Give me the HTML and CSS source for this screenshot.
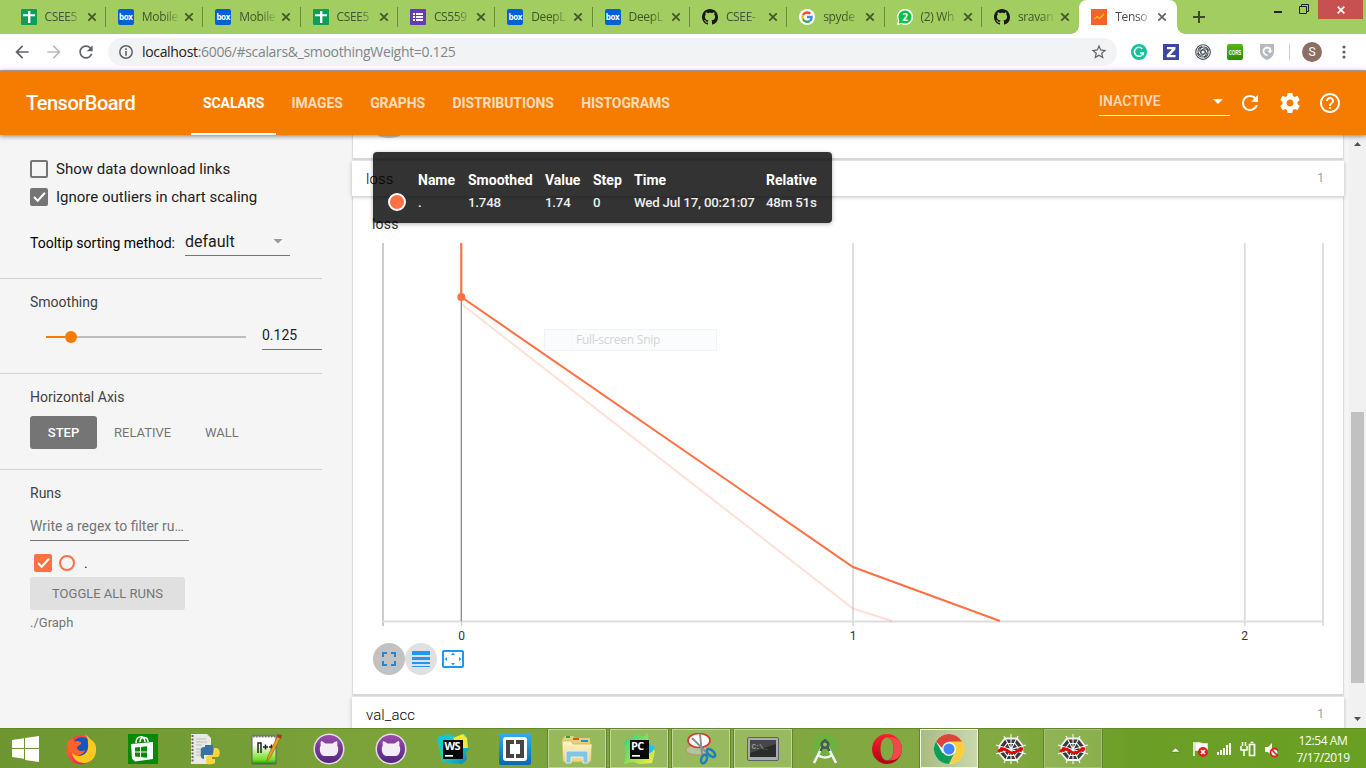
FILE: index.html
```html
<!DOCTYPE html>
<html lang="en">
<head>
<meta charset="utf-8">
<title>TensorBoard</title>
<link rel="stylesheet" href="styles.css">
</head>
<body>
<svg class="defs" width="0" height="0">
  <defs>
    <symbol id="sheet" viewBox="0 0 16 16"><rect width="16" height="16" rx="1" fill="#0f9d58"/><path d="M7 2h2.400v3.300H14v2H9.400V14H7V7.300H2v-2h5z" fill="#fff"/></symbol>
    <symbol id="close" viewBox="0 0 10 10"><path d="M1.300 1.300l7.400 7.400M8.700 1.300L1.300 8.700" stroke="currentColor" stroke-width="1.700"/></symbol>
    <symbol id="github" viewBox="0 0 16 16"><path fill="#191717" d="M8 0C3.580 0 0 3.580 0 8c0 3.540 2.290 6.530 5.470 7.590.4.070.55-.17.55-.38 0-.19-.01-.82-.01-1.490-2.010.37-2.530-.49-2.690-.94-.09-.23-.48-.94-.82-1.130-.28-.15-.68-.52-.01-.53.63-.01 1.080.58 1.230.82.72 1.210 1.870.87 2.330.66.07-.52.28-.87.51-1.070-1.780-.2-3.640-.89-3.640-3.950 0-.87.31-1.590.82-2.150-.08-.2-.36-1.020.08-2.120 0 0 .67-.21 2.200.82.64-.18 1.320-.27 2-.27s1.360.09 2 .27c1.530-1.040 2.200-.82 2.200-.82.44 1.100.16 1.920.08 2.120.51.56.82 1.270.82 2.150 0 3.070-1.870 3.750-3.650 3.950.29.25.54.73.54 1.480 0 1.070-.01 1.930-.01 2.200 0 .21.15.46.55.38A8.010 8.010 0 0016 8c0-4.420-3.580-8-8-8z"/></symbol>
    <symbol id="refresh" viewBox="0 0 24 24"><path fill="currentColor" d="M17.650 6.350C16.200 4.900 14.210 4 12 4c-4.420 0-7.990 3.580-7.990 8s3.570 8 7.990 8c3.730 0 6.840-2.550 7.730-6h-2.080c-.82 2.330-3.040 4-5.650 4-3.310 0-6-2.690-6-6s2.690-6 6-6c1.660 0 3.140.69 4.220 1.780L13 11h7V4l-2.350 2.350z"/></symbol>
    <symbol id="arrow" viewBox="0 0 24 24"><path fill="currentColor" d="M20 11H7.830l5.590-5.590L12 4l-8 8 8 8 1.410-1.410L7.830 13H20v-2z"/></symbol>
    <symbol id="cat" viewBox="0 0 32 32"><circle cx="16" cy="16" r="15.500" fill="#e6deea"/><circle cx="16" cy="16" r="14" fill="url(#purple)"/><path d="M8 8q2.500.5 4.500 2.500h7Q21.500 8.500 24 8q.8 2 .3 4.500 1.200 1.500.9 4.500-.4 5.500-4.700 6H11.500q-4.300-.5-4.700-6-.3-3 .9-4.500Q7.200 10 8 8z" fill="#f3eef5"/></symbol>
    <symbol id="web" viewBox="0 0 32 32"><path d="M10 5.500h12l5.500 7v8L22 27H10l-5.500-6.500v-8z" fill="#3a3a3a" stroke="#f4f4f4" stroke-width="1.800"/><g fill="none" stroke="#f4f4f4" stroke-width="1.100"><path d="M16 1v30M1 12l30 9M1 21l30-9M9 3l14 27M23 3L9 30"/><path d="M12 10.500h8l3 4v4l-3 4h-8l-3-4v-4z"/></g><path d="M3.500 19c4-6.500 8-1 12 .5 6 2.500 6-4 12.500-3.500" fill="none" stroke="#f00000" stroke-width="2.800"/></symbol>
    <linearGradient id="purple" x2="0" y2="1"><stop stop-color="#9b4bab"/><stop offset="1" stop-color="#51277f"/></linearGradient>
    <linearGradient id="fox" x2=".6" y2="1"><stop stop-color="#ff2858"/><stop offset=".45" stop-color="#ff5a2a"/><stop offset="1" stop-color="#f01c60"/></linearGradient>
    <linearGradient id="folder" x2="0" y2="1"><stop stop-color="#fff5c8"/><stop offset="1" stop-color="#ecd27b"/></linearGradient>
    <linearGradient id="jetA" x2="1" y2="1"><stop stop-color="#08c5ec"/><stop offset=".5" stop-color="#25cda8"/><stop offset="1" stop-color="#087cdf"/></linearGradient>
    <linearGradient id="jetB" x2="1" y2="1"><stop stop-color="#20d58c"/><stop offset=".6" stop-color="#a6df50"/><stop offset="1" stop-color="#fcf43f"/></linearGradient>
    <linearGradient id="operaRed" x2="0" y2="1"><stop stop-color="#fb2030"/><stop offset="1" stop-color="#a90314"/></linearGradient>
    <linearGradient id="brack" x2="0" y2="1"><stop stop-color="#30b0ec"/><stop offset="1" stop-color="#0868b4"/></linearGradient>
    <linearGradient id="note" x2="0" y2="1"><stop offset=".3" stop-color="#fff"/><stop offset=".85" stop-color="#72df23"/><stop offset="1" stop-color="#168a20"/></linearGradient>
  </defs>
</svg>

<header class="tabs">
  <div class="tab"><svg class="fav"><use href="#sheet"/></svg><span>CSEE5</span><svg class="x"><use href="#close"/></svg></div>
  <div class="tab"><i class="fav box">box</i><span>Mobile</span><svg class="x"><use href="#close"/></svg></div>
  <div class="tab"><i class="fav box">box</i><span>Mobile</span><svg class="x"><use href="#close"/></svg></div>
  <div class="tab"><svg class="fav"><use href="#sheet"/></svg><span>CSEE5</span><svg class="x"><use href="#close"/></svg></div>
  <div class="tab"><svg class="fav" viewBox="0 0 16 16"><rect width="16" height="16" rx="1" fill="#673ab7"/><path d="M3 4h2v2H3zM6 4h7v2H6zM3 7h2v2H3zM6 7h7v2H6zM3 10h2v2H3zM6 10h7v2H6z" fill="#fff"/></svg><span>CS559</span><svg class="x"><use href="#close"/></svg></div>
  <div class="tab"><i class="fav box">box</i><span>DeepL</span><svg class="x"><use href="#close"/></svg></div>
  <div class="tab"><i class="fav box">box</i><span>DeepL</span><svg class="x"><use href="#close"/></svg></div>
  <div class="tab"><svg class="fav"><use href="#github"/></svg><span>CSEE-</span><svg class="x"><use href="#close"/></svg></div>
  <div class="tab"><svg class="fav" viewBox="0 0 16 16"><circle cx="8" cy="8" r="8" fill="#fff"/><g fill="none" stroke-width="2.300"><path d="M4 6a4.700 4.700 0 017.300-1.300" stroke="#ea4335"/><path d="M4 6a4.700 4.700 0 000 4.200" stroke="#fbbc05"/><path d="M4 10.200a4.700 4.700 0 007 1.600" stroke="#34a853"/><path d="M11 11.800A4.700 4.700 0 0012.600 8H8" stroke="#4285f4"/></g></svg><span>spyde</span><svg class="x"><use href="#close"/></svg></div>
  <div class="tab"><svg class="fav" viewBox="0 0 16 16"><path d="M0 16l1-4.500A8 8 0 114.500 15z" fill="#fff"/><path d="M1.700 14.400l.7-3A6.500 6.500 0 115 13.800z" fill="#08c143"/><text x="8" y="12" text-anchor="middle" class="fav-num">2</text></svg><span>(2) Wh</span><svg class="x"><use href="#close"/></svg></div>
  <div class="tab"><svg class="fav"><use href="#github"/></svg><span>sravan</span><svg class="x"><use href="#close"/></svg></div>
  <div class="tab active"><svg class="fav" viewBox="0 0 16 16"><rect width="16" height="16" fill="#f4632a"/><path d="M3 10l3.500-2.500 2 2L13 5" fill="none" stroke="#ffb62c" stroke-width="1.300"/></svg><span>Tenso</span><svg class="x"><use href="#close"/></svg></div>
  <svg class="plus" viewBox="0 0 12 12"><path d="M6 0v12M0 6h12" stroke="#3b4a28" stroke-width="2"/></svg>
  <div class="window">
    <svg width="50" height="19" viewBox="0 0 50 19"><path d="M6 11h8v2H6z" fill="#222"/><path d="M31.500 6.500h7v7h-7zM33.500 6V4.500h7v7H39" fill="none" stroke="#222"/></svg>
    <b><svg width="8" height="8" viewBox="0 0 8 8"><path d="M.7.7l6.600 6.600M7.300.7L.7 7.300" stroke="#fff" stroke-width="1.700"/></svg></b>
  </div>
</header>

<div class="toolbar">
  <svg class="nav"><use href="#arrow"/></svg>
  <svg class="nav fwd"><use href="#arrow"/></svg>
  <svg class="nav"><use href="#refresh"/></svg>
  <div class="omni">
    <svg width="14" height="14" viewBox="0 0 14 14"><circle cx="7" cy="7" r="6.200" fill="none" stroke="#5f6368" stroke-width="1.500"/><path d="M6.200 3.300h1.600v1.600H6.200zM6.200 6h1.600v4.700H6.200z" fill="#5f6368"/></svg>
    <span class="url"><b>localhost</b>:6006/#scalars&amp;_smoothingWeight=0.125</span>
    <svg width="18" height="18" viewBox="0 0 24 24"><path fill="#5f6368" d="M22 9.240l-7.190-.62L12 2 9.190 8.630 2 9.240l5.460 4.730L5.820 21 12 17.270 18.180 21l-1.630-7.030L22 9.240zM12 15.400l-3.760 2.270 1-4.280-3.320-2.880 4.380-.38L12 6.100l1.710 4.040 4.380.38-3.320 2.880 1 4.280L12 15.400z"/></svg>
  </div>
  <div class="ext">
    <svg viewBox="0 0 16 16"><circle cx="8" cy="8" r="8" fill="#15c39a"/><path d="M11.200 4.700A4.500 4.500 0 1012.300 9H9M12.300 8.300v3" fill="none" stroke="#fff" stroke-width="1.500"/></svg>
    <svg viewBox="0 0 16 16"><rect width="16" height="16" fill="#3b47a0"/><path d="M4 3h8.500v2.200L7.300 11h5.200v2.200H3.700V11L9 5.200H4z" fill="#fff"/></svg>
    <svg viewBox="0 0 16 16"><g fill="none" stroke="#4b545c" stroke-width="1.150"><circle cx="8" cy="8" r="7.300"/><circle cx="8" cy="8" r="2.200"/><path d="M6 9C3.500 6.500 5 3 8.500 3c2.500 0 4.500 1.500 5 4M7 6c2.500-2.500 6-1 6 2.500 0 2.500-1.500 4.500-4 5M10 7c2.500 2.500 1 6-2.500 6-2.500 0-4.500-1.500-5-4M9 10c-2.500 2.500-6 1-6-2.500C3 5 4.500 3 7 2.500"/></g></svg>
    <i class="cors"><svg viewBox="0 0 16 16"><text x="8" y="11" text-anchor="middle" textLength="12.500" lengthAdjust="spacingAndGlyphs">CORS</text></svg></i>
    <svg viewBox="0 0 16 16"><path d="M1 0h14v8c0 4-4 7-7 8-3-1-7-4-7-8z" fill="#b5bac2"/><path d="M8.500 11A3.700 3.700 0 118 3.500c2 0 3.400 1 3.400 3.200" fill="none" stroke="#fff" stroke-width="1.800"/><path d="M8.500 6.500h5l-2.500 3z" fill="#fff"/></svg>
    <i class="rule"></i>
    <i class="avatar">S</i>
    <svg class="dots" viewBox="0 0 4 16"><g fill="#5f6368"><circle cx="2" cy="3" r="1.600"/><circle cx="2" cy="8" r="1.600"/><circle cx="2" cy="13" r="1.600"/></g></svg>
  </div>
</div>

<div class="board-bar">
  <h1>TensorBoard</h1>
  <nav><a class="on">SCALARS</a><a>IMAGES</a><a>GRAPHS</a><a>DISTRIBUTIONS</a><a>HISTOGRAMS</a></nav>
  <div class="status"><span>INACTIVE</span><i class="tri"></i></div>
  <div class="actions">
    <svg><use href="#refresh"/></svg>
    <svg viewBox="0 0 24 24"><path fill="#fff" d="M19.430 12.980c.04-.32.070-.64.070-.98s-.03-.66-.07-.98l2.110-1.650c.19-.15.24-.42.12-.64l-2-3.460c-.12-.22-.39-.3-.61-.22l-2.490 1c-.52-.4-1.080-.73-1.690-.98l-.38-2.650C14.460 2.180 14.250 2 14 2h-4c-.25 0-.46.18-.49.42l-.38 2.650c-.61.25-1.170.59-1.690.98l-2.490-1c-.23-.09-.49 0-.61.22l-2 3.460c-.13.22-.07.49.12.64l2.110 1.650c-.04.32-.07.65-.07.98s.03.66.070.98l-2.110 1.650c-.19.15-.24.42-.12.64l2 3.460c.12.22.39.3.61.22l2.490-1c.52.4 1.080.73 1.690.98l.38 2.650c.03.24.24.42.49.42h4c.25 0 .46-.18.49-.42l.38-2.650c.61-.25 1.170-.59 1.690-.98l2.490 1c.23.09.49 0 .61-.22l2-3.460c.12-.22.070-.49-.12-.64l-2.110-1.650zM12 15.500c-1.930 0-3.500-1.570-3.500-3.500s1.570-3.500 3.500-3.500 3.500 1.570 3.500 3.500-1.570 3.500-3.500 3.500z"/></svg>
    <svg viewBox="0 0 24 24"><path fill="#fff" d="M11 18h2v-2h-2v2zm1-16C6.480 2 2 6.480 2 12s4.480 10 10 10 10-4.480 10-10S17.520 2 12 2zm0 18c-4.410 0-8-3.590-8-8s3.590-8 8-8 8 3.590 8 8-3.590 8-8 8zm0-14c-2.210 0-4 1.790-4 4h2c0-1.100.9-2 2-2s2 .9 2 2c0 2-3 1.750-3 5h2c0-2.250 3-2.500 3-5 0-2.210-1.790-4-4-4z"/></svg>
  </div>
</div>

<main>
  <aside>
    <section class="options">
      <label><i class="check"></i>Show data download links</label>
      <label><i class="check full"><svg viewBox="0 0 18 18"><path d="M4 9l3.700 3.700L15 4.800" fill="none" stroke="#fff" stroke-width="2"/></svg></i>Ignore outliers in chart scaling</label>
      <div class="sort"><span>Tooltip sorting method:</span><div class="select">default<i class="tri"></i></div></div>
    </section>
    <section class="smooth">
      <h3>Smoothing</h3>
      <div class="slider-row"><div class="slider"><i class="filled"></i><i class="knob"></i><i class="rest"></i></div><div class="num">0.125</div></div>
    </section>
    <section class="axis">
      <h3>Horizontal Axis</h3>
      <div class="buttons"><b>STEP</b><span class="rel">RELATIVE</span><span>WALL</span></div>
    </section>
    <section class="runs">
      <h3>Runs</h3>
      <div class="regex">Write a regex to filter ru…</div>
      <div class="run"><i class="check orange"><svg viewBox="0 0 18 18"><path d="M4 9l3.700 3.700L15 4.800" fill="none" stroke="#fff" stroke-width="2"/></svg></i><i class="ring"></i><span>.</span></div>
      <div class="toggle">TOGGLE ALL RUNS</div>
      <div class="path">./Graph</div>
    </section>
  </aside>

  <div class="content">
    <div class="card prev"><i></i></div>
    <div class="pane-head"><span>loss</span><small>1</small></div>
    <div class="card chart">
      <h4>loss</h4>
      <svg class="plot" width="990" height="405" viewBox="353 240 990 405">
        <path d="M383 243v383" stroke="#ccc" stroke-width="2"/>
        <path d="M853 243v383M1244.800 243v383M1323 243v383" stroke="#dcdcdc" stroke-width="1.800"/>
        <path d="M382 621.500h942" stroke="#ddd" stroke-width="2"/>
        <path d="M461.300 243v378" stroke="#888" stroke-width="1.300"/><path d="M461.500 621v5" stroke="#ccc"/>
        <path d="M461.500 243v61L853 608.500l39 12.500" fill="none" stroke="#ff7043" stroke-opacity=".22" stroke-width="2"/>
        <path d="M461.300 243v54L853 567l147 54" fill="none" stroke="#ff7043" stroke-width="2"/>
        <circle cx="461.300" cy="297" r="4" fill="#ff7043"/>
        <g class="ticks"><text x="461.500" y="640">0</text><text x="853" y="640">1</text><text x="1244.500" y="640">2</text></g>
      </svg>
      <div class="chart-tools">
        <i class="round dark"><svg viewBox="0 0 24 24"><path fill="#1f86d8" d="M7 14H5v5h5v-2H7v-3zm-2-4h2V7h3V5H5v5zm12 7h-3v2h5v-5h-2v3zM14 5v2h3v3h2V5h-5z"/></svg></i>
        <i class="round"><svg viewBox="0 0 24 24"><path fill="#2196f3" d="M3 17h18v-2H3v2zm0 3h18v-1H3v1zm0-7h18v-3H3v3zm0-9v4h18V4H3z"/></svg></i>
        <i class="round none"><svg viewBox="0 0 24 24"><path fill="#2196f3" d="M12 5.500L10 8h4l-2-2.500zM18 10v4l2.500-2L18 10zM6 10l-2.500 2L6 14v-4zm8 6h-4l2 2.500 2-2.500zm7-13H3c-1.100 0-2 .9-2 2v14c0 1.100.9 2 2 2h18c1.100 0 2-.9 2-2V5c0-1.100-.9-2-2-2zm0 16.010H3V4.990h18v14.020z"/></svg></i>
      </div>
      <div class="ghost">Full-screen Snip</div>
    </div>
    <div class="pane-head last"><span>val_acc</span><small>1</small></div>
    <div class="tip">
      <table>
        <tr><th></th><th>Name</th><th>Smoothed</th><th>Value</th><th>Step</th><th>Time</th><th>Relative</th></tr>
        <tr><td><i></i></td><td>.</td><td>1.748</td><td>1.74</td><td>0</td><td>Wed Jul 17, 00:21:07</td><td>48m 51s</td></tr>
      </table>
    </div>
  </div>
  <div class="scroll"><i class="up"></i><i class="thumb"></i><i class="down"></i></div>
</main>

<footer>
  <div class="start"><svg width="28" height="26" viewBox="0 0 28 26"><path d="M0 4l12-1.800V12H0zM13 2l14-2v12H13zM0 13h12v9.800L0 21zM13 13h14v13l-14-2z" fill="#fff"/></svg></div>
  <div class="app"><svg viewBox="0 0 32 32"><circle cx="16" cy="17" r="14.500" fill="url(#fox)"/><circle cx="17" cy="13.500" r="9.500" fill="#1656bd"/><path d="M20 1c3 4 3 6 3 9 1 8-3 13-9 13-3 0-5-2-7-3 1 6 6 10 12 10 8 0 13-7 12-15 0-5-3-7-6-9-1-2-3-3-5-5z" fill="#ffc820"/><path d="M3 8l5-3c0 3 1 4 4 3 2 0 5 1 4 3l-4 3c0 4 4 5 8 3-1 5-8 7-13 3C2 17 1 12 3 8z" fill="#ff622a"/></svg></div>
  <div class="app"><svg viewBox="0 0 32 32"><rect x="1" y="1" width="30" height="30" fill="#078a07"/><path d="M4 11l22-2v17l-18 2.500-3-3z" fill="#fff"/><path d="M9 10c0-8 9-8 9-1M13 9c0-6 8-6 8 0" fill="none" stroke="#fff" stroke-width="1.500"/><path d="M8 14.500l5-.5v4.500H8zM14 13.900l6-.7v5.300h-6zM8 19.500h5V24l-5-.5zM14 19.500h6v5.300l-6-.8z" fill="#078a07"/></svg></div>
  <div class="app"><svg viewBox="0 0 32 32"><path d="M2 1h16l4 4v26H2z" fill="#e8e8e4"/><path d="M3.500 2v28" stroke="#666" stroke-width="2" stroke-dasharray="2 1.500"/><path d="M7 6h10M7 9h11M7 12h6M7 16h5M7 19h5M7 22h5" stroke="#bbb"/><path d="M12 19c-1-4 1-5 4-5v-2h8v7c0 2-1 3-3 3h-6v4c-3 0-4-3-3-7z" fill="#3872a3"/><path d="M25 15h3c4 2 3 8 1 9h-6v2h3v4c-3 2-9 2-9-1v-4c0-2 2-3 4-3h3z" fill="#ffd43b"/></svg></div>
  <div class="app"><svg viewBox="0 0 32 32"><path d="M1 3h24v28H1z" fill="url(#note)" stroke="#606060"/><path d="M2 3h22" stroke="#777" stroke-width="3" stroke-dasharray="1.500 1.500"/><path d="M7 20V10h3v10M12 14h5m-2.500-2.500v5M18 14h5m-2.500-2.500v5" fill="none" stroke="#222" stroke-width="1.500"/><path d="M27 2l3 2-11 21-3 3 1-5z" fill="#e9a11e" stroke="#9b6412" stroke-width=".7"/><path d="M26 1l5 1-1 4-4-2z" fill="#a23b37"/></svg></div>
  <div class="app"><svg><use href="#cat"/></svg></div>
  <div class="app"><svg><use href="#cat"/></svg></div>
  <div class="app"><svg viewBox="0 0 32 32"><path d="M0 4l12-3 5 3L29 1l1 10 2 5-3 4 1 6-5 5-20-2z" fill="url(#jetA)"/><path d="M16 5l10-4 4 4 1 10h-9z" fill="#f5e83c"/><path d="M6 7h20v19H6z" fill="#080808"/><text x="7.500" y="17" class="jet">WS</text><path d="M8 22h8v1.700H8z" fill="#fff"/></svg></div>
  <div class="app"><svg viewBox="0 0 32 32"><rect width="32" height="32" rx="2" fill="url(#brack)"/><rect x="4" y="4" width="24" height="24" rx="3" fill="#fff"/><path d="M7 7h8v4h-4v10h4v4H7zM17 7h8v18h-8v-4h4V11h-4z" fill="#454545"/></svg></div>
  <div class="app open"><svg viewBox="0 0 32 32"><path d="M1 7l3-4h8l2 2h15l1 23H2z" fill="#e7cf7b"/><path d="M5 3h4v2H5z" fill="#17af34"/><path d="M12 5h6v2h-6z" fill="#d55727"/><path d="M20 7h7v2h-7z" fill="#258dd0"/><path d="M1 8h9l2 3h19l-1 18H2z" fill="url(#folder)" stroke="#c9ad52" stroke-width=".7"/><path d="M5 30V20q0-2 2-2h18q2 0 2 2v10h-5v-6H10v6z" fill="#83c4e5" stroke="#d8f1fb"/></svg></div>
  <div class="app open"><svg viewBox="0 0 32 32"><path d="M1 9L14 1l6 3 5-4 1 12 6 6-3 12-12 1-7-2-9 2 2-10z" fill="url(#jetB)"/><path d="M26 11l6 3-3 5-4 2z" fill="#12c8f5"/><path d="M7 7h19v19H7z" fill="#080808"/><text x="8" y="17" class="jet">PC</text><path d="M9 22h8v1.700H9z" fill="#fff"/></svg></div>
  <div class="app open"><svg viewBox="0 0 32 32"><ellipse cx="12" cy="17" rx="11" ry="5" fill="#b9c39b" stroke="#c7766c" stroke-width=".7"/><ellipse cx="14" cy="7.500" rx="11" ry="7" fill="#fff" stroke="#d73a31" stroke-width="1.700"/><path d="M7 5l14 14M15 1l2 20" stroke="#879198" stroke-width="2"/><g fill="none" stroke="#187fc1" stroke-width="2.500"><ellipse cx="19" cy="26" rx="2.700" ry="4.500" transform="rotate(20 19 26)"/><ellipse cx="26" cy="20" rx="2.700" ry="5" transform="rotate(-48 26 20)"/></g></svg></div>
  <div class="app open"><svg viewBox="0 0 32 32"><rect x=".5" y="4.500" width="31" height="23" rx="1.500" fill="#a9acad" stroke="#5d6263"/><rect x="3" y="7" width="26" height="17" fill="#292b2c"/><text x="4.500" y="15.500" class="cmd">C:\_</text><path d="M3 7h26v4L3 20z" fill="#fff" opacity=".13"/></svg></div>
  <div class="app"><svg viewBox="0 0 32 32"><circle cx="16" cy="14" r="13" fill="#6fb13f"/><path d="M11 18L5 30M21 18l6 12M8 21.500q8 6 16 0M13 14l-3 6M19 14l3 6" fill="none" stroke="#f2f2f2" stroke-width="2.600"/><circle cx="16" cy="11.500" r="3.300" fill="#8fc45d" stroke="#455a54" stroke-width="2.600"/><path d="M16 6v3M13.500 14l-2 4M18.500 14l2 4" stroke="#455a54" stroke-width="2.600"/></svg></div>
  <div class="app"><svg viewBox="0 0 32 32"><path fill-rule="evenodd" d="M16 1a15 15 0 100 30 15 15 0 000-30zm0 3.500c4 0 6.500 5 6.500 11.500S20 27.500 16 27.500 9.500 22.500 9.500 16 12 4.500 16 4.500z" fill="url(#operaRed)"/><path d="M17 4.500c11-2 14 6 14 11.500 0 7-5 12-14 11.500 4-1 5.500-6 5.500-11.500S21 5.500 17 4.500z" fill="#f0484b"/></svg></div>
  <div class="app open current"><svg viewBox="0 0 32 32"><circle cx="16" cy="16" r="15" fill="#fff"/><path d="M16 8h13a15 15 0 01-13 23l6.500-12z" fill="#ffcd40"/><path d="M3 8.500L9.500 20 22 19l-6 12A15 15 0 013 8.500z" fill="#0f9d58"/><path d="M3 8.500A15 15 0 0129 8.500H16l-6.500 7z" fill="#db4437"/><circle cx="16" cy="16" r="7" fill="#f4f4f4"/><circle cx="16" cy="16" r="5.500" fill="#4285f4"/></svg></div>
  <div class="app"><svg><use href="#web"/></svg></div>
  <div class="app open faint"><svg><use href="#web"/></svg></div>
  <div class="tray">
    <svg width="110" height="24" viewBox="1168 737 110 24"><path d="M1171 752l4.500-4 4.500 4z" fill="#fff" stroke="#46631e" stroke-width=".5"/><path d="M1194 742v14M1196 743h4l2 1h5v7h-6l-1-1h-4z" fill="#fff" stroke="#fff" stroke-width="1.500"/><circle cx="1203" cy="752" r="5" fill="#df2020"/><path d="M1201 750l4 4m0-4l-4 4" stroke="#fff" stroke-width="1.600"/><path d="M1217 752h2v3h-2zM1220 750h2v5h-2zM1223 748h2v7h-2zM1226 745h2v10h-2zM1229 743h2v12h-2z" fill="#fff"/><path d="M1241 746v4h6v-4M1242.500 742v4m3-4v4M1244 750v6" stroke="#fff" stroke-width="1.500" fill="none"/><path d="M1249.500 744.500h5v11h-5zM1250.500 742.500h3" stroke="#fff" stroke-width="1.700" fill="none"/><path d="M1265 747h3l4-4v13l-4-4h-3z" fill="#fff"/><circle cx="1274.500" cy="752.500" r="4" fill="#eee" stroke="#df2020" stroke-width="1.800"/><path d="M1272 750l5 5" stroke="#df2020" stroke-width="1.500"/></svg>
    <div class="clock"><span>12:54 AM</span><span>7/17/2019</span></div>
  </div>
</footer>
</body>
</html>
```
FILE: styles.css
```css
* { box-sizing: border-box; }
body { margin: 0; width: 1366px; height: 768px; overflow: hidden; display: flex; flex-direction: column; font-family: Roboto, sans-serif; background: #f5f5f5; color: #212121; }
i { font-style: normal; display: block; flex: none; }
svg { display: block; flex: none; }
h1, h3, h4 { margin: 0; font-weight: 400; }
.defs { position: absolute; }

.tabs { height: 34px; flex: none; display: flex; background: #a2cd60; padding-left: 8.500px; font: 12px/34px "Open Sans", sans-serif; color: #43542e; }
.tab { width: 97.350px; flex: none; display: flex; align-items: center; padding-left: 12px; position: relative; }
.tab:not(.active)::after { content: ""; position: absolute; right: 0; top: 7px; width: 1px; height: 20px; background: #6c883f; }
.tab:nth-child(11)::after { display: none; }
.tab span { width: 36px; margin-left: 8px; white-space: nowrap; letter-spacing: -.35px; mask-image: linear-gradient(90deg, #000 60%, rgba(0,0,0,.15)); }
.fav { width: 16px; height: 16px; }
.box { background: #0061d5; border-radius: 2px; color: #fff; font: bold 8px/15px "Open Sans", sans-serif; text-align: center; letter-spacing: -.4px; }
.fav-num { font: bold 10px "Open Sans", sans-serif; fill: #fff; }
.x { width: 10px; height: 10px; margin-left: 6px; color: #43542e; }
.active { background: #fff; border-radius: 8px 8px 0 0; color: #45494d; }
.active .x { color: #5f6368; }
.active::before { content: ""; position: absolute; left: -8px; right: -8px; bottom: 0; height: 8px; background: radial-gradient(circle at 0 0, transparent 7.5px, #fff 8px) left / 8px 8px no-repeat, radial-gradient(circle at 8px 0, transparent 7.5px, #fff 8px) right / 8px 8px no-repeat; }
.plus { width: 12px; height: 12px; margin: 11px 0 0 16px; }
.window { margin-left: auto; display: flex; padding-right: 3px; }
.window b { width: 45px; height: 19px; background: #c75050; display: flex; align-items: center; justify-content: center; }

.toolbar { height: 37px; flex: none; display: flex; background: #fff; border-bottom: 1px solid #b4b4b4; padding: 4px 0 5px 12px; }
.nav { width: 20px; height: 20px; margin: 4px 12px 0 0; color: #5f6368; }
.fwd { transform: scaleX(-1); color: #b9bbbd; }
.omni { width: 1009px; height: 28px; border-radius: 14px; background: #f1f3f4; display: flex; align-items: center; padding: 0 9px 0 11px; font: 14px "Open Sans", sans-serif; color: #80868b; }
.url { flex: 1; margin-left: 9px; letter-spacing: -.33px; padding-bottom: 1px; }
.url b { font-weight: 400; color: #202124; }
.ext { display: flex; align-items: center; gap: 16px; margin-left: 14px; }
.ext svg { width: 16px; height: 16px; }
.cors { width: 16px; height: 16px; border-radius: 2px; background: linear-gradient(#5ab514, #2a8c00); }
.cors text { font: bold 8px "Liberation Sans", sans-serif; fill: #fff; }
.rule { width: 1px; height: 16px; background: #ccc; margin-left: -2px; }
.avatar { width: 20px; height: 20px; border-radius: 50%; background: #8d6e63; color: #fff; font: 12px/20px Roboto, sans-serif; text-align: center; margin-left: -4px; }
.ext .dots { width: 4px; margin-left: 4px; }

.board-bar { height: 64px; flex: none; background: #f57c00; color: #fff; display: flex; align-items: center; padding-left: 26px; box-shadow: 0 1px 5px rgba(0,0,0,.5); position: relative; z-index: 3; }
h1 { width: 165px; font-size: 20px; font-weight: 500; letter-spacing: -.5px; }
.board-bar nav { display: flex; height: 64px; gap: 3.400px; font: 700 14px/64px Roboto, sans-serif; letter-spacing: -.1px; }
.board-bar a { padding: 0 12px; color: #fddcbb; }
.board-bar .on { color: #fff; border-bottom: 2px solid #fff; }
.status { width: 131px; height: 29px; margin-left: auto; border-bottom: 1px solid #fff; display: flex; justify-content: space-between; align-items: center; padding-right: 7px; font-size: 14px; font-weight: 500; color: #fddcbb; margin-top: -4px; }
.tri { width: 10px; height: 5px; background: currentColor; clip-path: polygon(0 0, 100% 0, 50% 100%); }
.status .tri { color: #fff; margin-top: 2px; }
.actions { display: flex; gap: 16px; margin: 0 24px 0 8px; }
.actions svg { width: 24px; height: 24px; }

main { height: 593px; flex: none; display: flex; }
aside { width: 352px; }
section { width: 322px; padding-left: 30px; border-bottom: 1px solid #d2d2d2; }
h3 { font-size: 14px; line-height: 18px; color: #424242; }
.options { height: 144px; padding-top: 25px; }
label { height: 18px; margin-bottom: 10px; display: flex; align-items: center; gap: 8px; font-size: 15px; white-space: nowrap; }
.check { width: 18px; height: 18px; border: 2px solid #757575; border-radius: 2px; }
.full { border: 0; background: #757575; }
.orange { border: 0; background: #ff7043; }
.sort { height: 28px; display: flex; align-items: center; gap: 10px; font-size: 14px; margin-top: 22px; color: #000; white-space: nowrap; }
.sort span { width: 145px; padding-top: 1px; }
.select { width: 105px; height: 27px; border-bottom: 1px solid #757575; font-size: 16px; display: flex; align-items: center; justify-content: space-between; color: #212121; padding: 0 7px 1px 0; }
.select .tri { color: #9a9a9a; }
.smooth { height: 95px; padding-top: 14px; }
.slider-row { display: flex; margin-top: 11px; }
.slider { width: 200px; margin: 0 16px; display: flex; align-items: center; height: 30px; }
.filled { width: 19px; height: 2px; background: #f57c00; }
.knob { width: 12px; height: 12px; border-radius: 50%; background: #f57c00; }
.rest { width: 169px; height: 2px; background: #bdbdbd; }
.num { width: 60px; height: 28px; border-bottom: 1px solid #757575; font-size: 14px; line-height: 26px; }
.axis { height: 96px; padding-top: 14px; }
.buttons { display: flex; margin-top: 10px; font-size: 13px; line-height: 33px; color: #757575; }
.buttons b { width: 67px; height: 33px; border-radius: 3px; background: #757575; color: #fff; font-weight: 500; text-align: center; }
.rel { width: 91px; }
.buttons b + span { margin-left: 17px; }
.runs { border: 0; padding-top: 14px; }
.regex { width: 159px; height: 30px; margin-top: 9px; border-bottom: 1px solid #757575; font-size: 14px; line-height: 30px; color: #757575; white-space: nowrap; }
.run { height: 18px; margin: 13px 0 5px 4px; display: flex; align-items: center; font-size: 14px; }
.ring { width: 16px; height: 16px; border: 2px solid #ff7043; border-radius: 50%; margin: 0 9px 0 7px; }
.toggle { width: 155px; height: 33px; border-radius: 3px; background: #e0e0e0; font-size: 13px; line-height: 33px; text-align: center; color: #757575; }
.path { font-size: 13px; line-height: 25px; color: #757575; }

.content { width: 992px; position: relative; }
.card { width: 992px; background: #fff; border: 1px solid #dcdcdc; border-top: 0; box-shadow: 0 1px 1px rgba(0,0,0,.1); }
.prev { height: 24px; }
.prev i { width: 32px; height: 4px; margin-left: 20px; background: #ccc; clip-path: ellipse(11px 3px at 16px 0); }
.pane-head { height: 35px; margin: 2px 0 0; position: relative; z-index: 1; background: #fff; display: flex; justify-content: space-between; align-items: center; padding: 0 20px 0 14px; font-size: 15px; color: #000; box-shadow: 0 1px 4px rgba(0,0,0,.25); }
.pane-head span { letter-spacing: .1px; font-weight: 350; }
.pane-head small { font-size: 12px; color: #9e9e9e; margin-top: -2px; }
.chart { height: 499px; position: relative; }
h4 { height: 44px; padding: 20px 0 0 19px; font-size: 14px; line-height: 16px; color: #333; letter-spacing: .2px; }
.ticks { font: 12px Roboto, sans-serif; fill: #32313f; text-anchor: middle; }
.chart-tools { display: flex; margin: -2px 0 0 20px; }
.round { width: 32px; height: 32px; border-radius: 50%; background: #e0e0e0; padding: 4px; }
.dark { background: #c2c2c2; }
.none { background: none; }
.round svg { width: 24px; height: 24px; }
.ghost { position: absolute; left: 191px; top: 133px; width: 173px; height: 22px; border: 1px solid #eef4fa; background: linear-gradient(90deg, #fafbfc 27px, #eef2f7 27px, #fafcfe 28px); padding-left: 31px; font: 12px/20px "Open Sans", sans-serif; color: #d4d4d4; letter-spacing: -.25px; white-space: nowrap; }
.last { height: 32px; margin-top: 2px; padding-top: 3px; }
.tip { position: absolute; left: 21px; top: 17px; width: 459px; height: 71px; background: rgba(0,0,0,.8); border-radius: 4px; color: #fff; font-size: 14px; box-shadow: 0 1px 4px rgba(0,0,0,.3); padding: 17px 0 0 14.500px; z-index: 2; }
table { border-collapse: collapse; table-layout: fixed; width: 444px; }
th, td { padding: 0; text-align: left; height: 22px; white-space: nowrap; }
th { font-weight: 700; }
td { font-size: 13.300px; font-weight: 500; color: #eee; letter-spacing: -.2px; }
th:nth-child(1) { width: 30.500px; } th:nth-child(2) { width: 50px; } th:nth-child(3) { width: 77px; } th:nth-child(4) { width: 48px; } th:nth-child(5) { width: 41px; } th:nth-child(6) { width: 132px; }
td i { width: 18px; height: 18px; background: #ff7043; border: 2px solid #fff; border-radius: 50%; }
.scroll { width: 17px; margin-left: 5px; background: #f1f1f1; padding: 7px 2px; }
.up, .down { width: 7px; height: 4px; margin-left: 3px; background: #505050; clip-path: polygon(50% 0, 100% 100%, 0 100%); }
.down { transform: scaleY(-1); margin-top: 34px; }
.thumb { width: 13px; height: 271px; margin-top: 266px; background: #c1c1c1; }

footer { height: 40px; display: flex; align-items: center; flex: none; position: relative; z-index: 4; border-top: 1px solid #648729; background: linear-gradient(90deg, #6d9631, #7ca43a 400px, #7fa640 750px, #83aa42 1000px, #6c9e27 1130px, #69a022); }
.start { width: 50px; padding-left: 12px; }
.app { width: 58px; height: 39px; margin: 0 2px; flex: none; display: flex; align-items: center; justify-content: center; }
.app svg { width: 32px; height: 32px; }
.open { background: rgba(190,215,140,.4); border: 1px solid #c2d69b; outline: 1px solid #64852f; }
.current { background: linear-gradient(90deg, #a8bc82, #c9d9ad); border-color: #f3f7e8; }
.faint { background: rgba(200,215,160,.28); border-color: #a7bf76; }
.jet { font: bold 11px "Open Sans", sans-serif; fill: #fff; letter-spacing: -.7px; }
.cmd { font: bold 8px "Liberation Mono", monospace; fill: #888; letter-spacing: -1px; }
.tray { display: flex; align-items: center; margin-left: 64px; color: #fff; font: 12px/17px "Open Sans", sans-serif; }
.clock { width: 88px; display: flex; flex-direction: column; align-items: center; letter-spacing: -.4px; padding-left: 2px; }
```
